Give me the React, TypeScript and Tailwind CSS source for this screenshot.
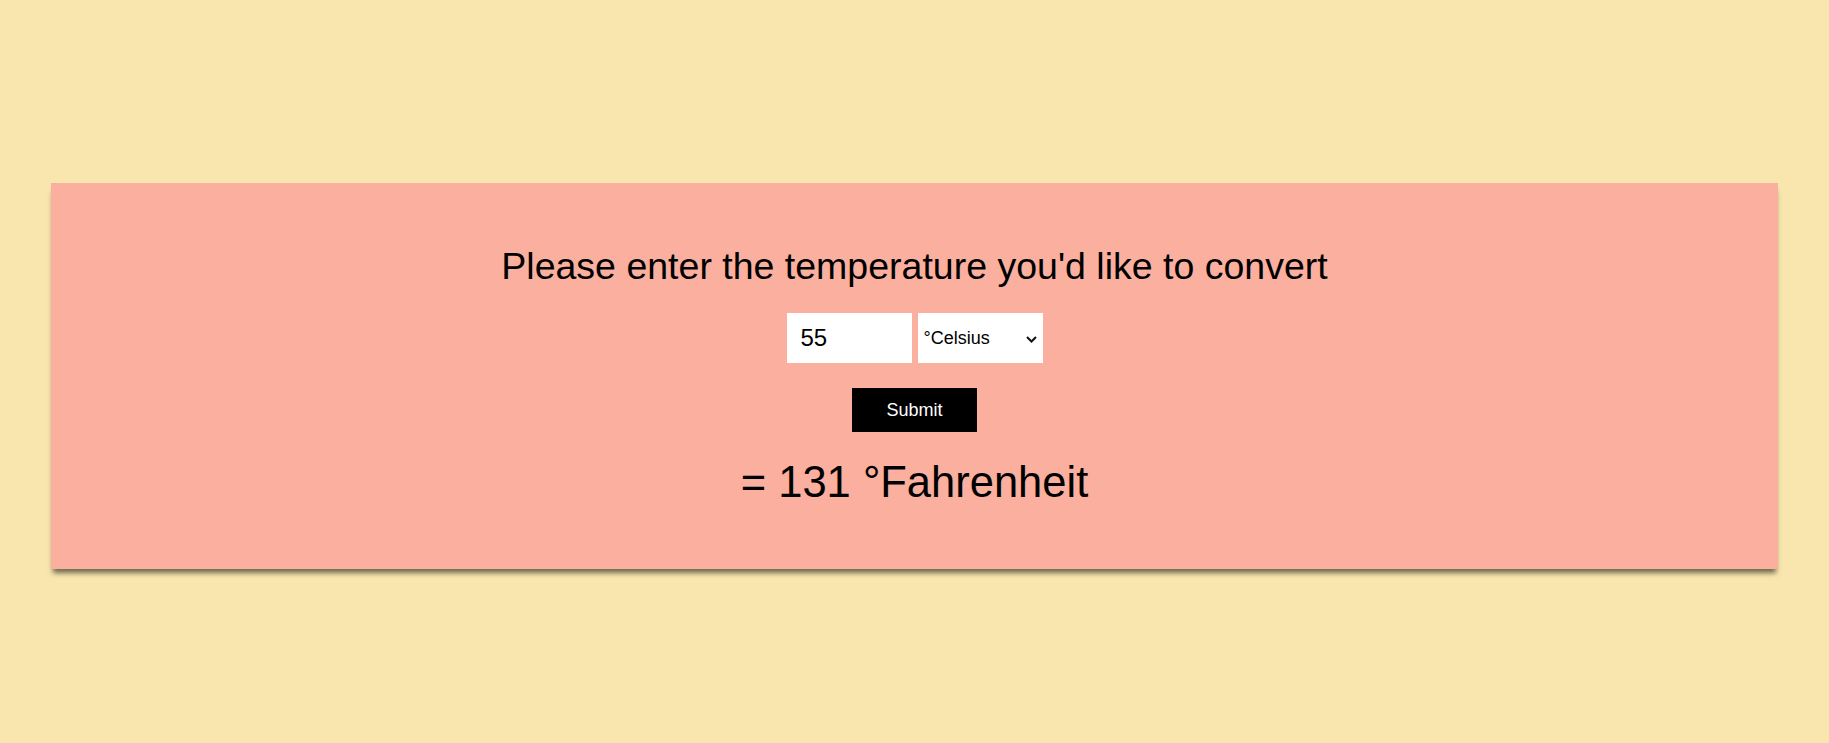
import { useState } from "react";

export default function App() {
  const [value, setValue] = useState("55");
  const [unit, setUnit] = useState("celsius");
  const [result, setResult] = useState("= 131 °Fahrenheit");

  const convert = () => {
    const n = Number(value);
    if (unit === "celsius") {
      setResult(`= ${Math.round((n * 9) / 5 + 32)} °Fahrenheit`);
    } else {
      setResult(`= ${Math.round(((n - 32) * 5) / 9)} °Celsius`);
    }
  };

  return (
    <div className="min-h-[743px] bg-[#f8e6ae] pt-[183px] font-['Liberation_Sans',Arial,sans-serif] text-black">
      <div className="mx-[51px] flex flex-col items-center bg-[#faaf9f] pt-[62px] pb-[62px] shadow-[0_6px_5px_-2px_rgba(0,0,0,0.55)]">
        <h1 className="text-[37.5px] leading-[1.15]">
          Please enter the temperature you'd like to convert
        </h1>

        <div className="mt-[25px] flex gap-[6px]">
          <input
            type="text"
            value={value}
            onChange={(e) => setValue(e.target.value)}
            className="h-[50px] w-[125px] bg-white px-[14px] text-[24px] outline-none"
          />
          <div className="relative h-[50px] w-[125px] bg-white">
            <select
              value={unit}
              onChange={(e) => setUnit(e.target.value)}
              className="h-full w-full appearance-none bg-transparent pl-[6px] text-[18px] outline-none"
            >
              <option value="celsius">°Celsius</option>
              <option value="fahrenheit">°Fahrenheit</option>
            </select>
            <svg
              className="pointer-events-none absolute top-[23px] right-[6px]"
              width="11"
              height="7"
              viewBox="0 0 11 7"
              fill="none"
            >
              <path d="M1 1l4.5 4.5L10 1" stroke="#111" strokeWidth="2" />
            </svg>
          </div>
        </div>

        <button
          onClick={convert}
          className="mt-[25px] h-[44px] w-[125px] bg-black text-[18px] text-white"
        >
          Submit
        </button>

        <p className="mt-[25px] text-[43.5px] leading-[1.15]">{result}</p>
      </div>
    </div>
  );
}
